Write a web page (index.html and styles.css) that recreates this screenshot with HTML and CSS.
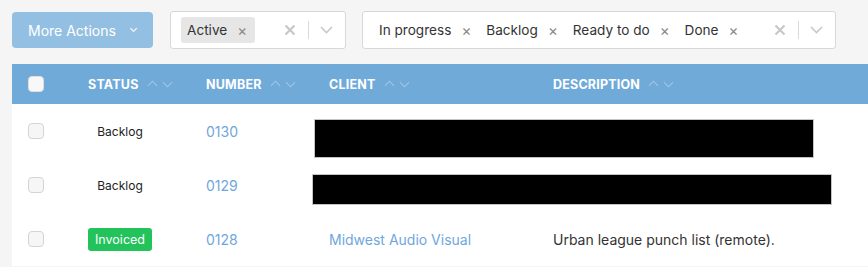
FILE: index.html
```html
<!DOCTYPE html>
<html>
  <head>
    <title>Projects</title>
    <link rel="stylesheet" href="styles.css">
  </head>
  <body>
    <div class="toolbar">
      <button class="more-btn">More Actions <span class="caret">&#8964;</span></button>

      <div class="select select-small">
        <div class="chips">
          <span class="chip chip-grey">Active <span class="chip-x">&times;</span></span>
        </div>
        <div class="select-tools">
          <svg class="clear-ico" width="12" height="12" viewBox="0 0 12 12"><path d="M1.5 1.5 L10.5 10.5 M10.5 1.5 L1.5 10.5" stroke="#c8c8c8" stroke-width="2.2"/></svg>
          <span class="sep"></span>
          <svg class="drop-ico" width="13" height="8" viewBox="0 0 13 8"><path d="M1 1 L6.5 6.5 L12 1" fill="none" stroke="#c8c8c8" stroke-width="1.6"/></svg>
        </div>
      </div>

      <div class="select select-big">
        <div class="chips">
          <span class="chip">In progress <span class="chip-x">&times;</span></span>
          <span class="chip">Backlog <span class="chip-x">&times;</span></span>
          <span class="chip">Ready to do <span class="chip-x">&times;</span></span>
          <span class="chip">Done <span class="chip-x">&times;</span></span>
        </div>
        <div class="select-tools">
          <svg class="clear-ico" width="12" height="12" viewBox="0 0 12 12"><path d="M1.5 1.5 L10.5 10.5 M10.5 1.5 L1.5 10.5" stroke="#c8c8c8" stroke-width="2.2"/></svg>
          <span class="sep"></span>
          <svg class="drop-ico" width="13" height="8" viewBox="0 0 13 8"><path d="M1 1 L6.5 6.5 L12 1" fill="none" stroke="#c8c8c8" stroke-width="1.6"/></svg>
        </div>
      </div>
    </div>

    <div class="table">
      <div class="row head">
        <div class="cell"><span class="check check-head"></span></div>
        <div class="cell">STATUS <span class="sort"><i class="up"></i><i class="down"></i></span></div>
        <div class="cell">NUMBER <span class="sort"><i class="up"></i><i class="down"></i></span></div>
        <div class="cell">CLIENT <span class="sort"><i class="up"></i><i class="down"></i></span></div>
        <div class="cell">DESCRIPTION <span class="sort"><i class="up"></i><i class="down"></i></span></div>
      </div>

      <div class="row">
        <div class="cell"><span class="check"></span></div>
        <div class="cell"><span class="status">Backlog</span></div>
        <div class="cell"><a class="num">0130</a></div>
        <div class="cell"></div>
        <div class="cell"></div>
        <span class="redact redact-1"></span>
      </div>

      <div class="row">
        <div class="cell"><span class="check"></span></div>
        <div class="cell"><span class="status">Backlog</span></div>
        <div class="cell"><a class="num">0129</a></div>
        <div class="cell"></div>
        <div class="cell"></div>
        <span class="redact redact-2"></span>
      </div>

      <div class="row">
        <div class="cell"><span class="check"></span></div>
        <div class="cell"><span class="status status-invoiced">Invoiced</span></div>
        <div class="cell"><a class="num">0128</a></div>
        <div class="cell"><a class="client">Midwest Audio Visual</a></div>
        <div class="cell desc">Urban league punch list (remote).</div>
      </div>
    </div>
  </body>
</html>
```

FILE: styles.css
```css
body {
  margin: 0;
  background: #f5f5f5;
  font-family: Inter, "Noto Sans", sans-serif;
  font-size: 14px;
  color: #333;
}

/* top filter bar */
.toolbar {
  display: flex;
  align-items: center;
  padding: 11px 12px 0 12px;
  height: 38px;
}
.more-btn {
  width: 141px;
  height: 36px;
  background: #93c0e2;
  border: none;
  border-radius: 4px;
  color: #fff;
  font-family: inherit;
  font-size: 14px;
  padding: 0 0 0 16px;
  text-align: left;
  margin-right: 17px;
}
.more-btn .caret {
  display: inline-block;
  margin-left: 9px;
  font-size: 12px;
  position: relative;
  top: -4px;
}

.select {
  display: flex;
  align-items: center;
  height: 36px;
  background: #fff;
  border: 1px solid #d6d8de;
  border-radius: 3px;
  padding-left: 10px;
  box-sizing: content-box;
}
.select-small {
  width: 164px;
  margin-right: 16px;
}
.select-big {
  width: 462px;
}
.chips {
  display: flex;
  align-items: center;
  flex-grow: 1;
  font-size: 13.6px;
}
.chip {
  display: flex;
  align-items: center;
  height: 26px;
  padding: 0 7px 0 6px;
  margin-right: 2px;
  border-radius: 3px;
  color: #333;
}
.chip-grey {
  background: #e6e6e6;
  padding-right: 8px;
}
.chip-x {
  color: #888;
  font-size: 15px;
  margin-left: 10px;
}
.select-tools {
  display: flex;
  align-items: center;
  padding-right: 12px;
}
.clear-ico {
  margin-right: 1px;
}
.sep {
  width: 1px;
  height: 18px;
  background: #d9d9d9;
  margin: 0 11px;
}

/* table */
.table {
  margin: 15px 0 0 12px;
  background: #fff;
}
.row {
  position: relative;
  display: grid;
  grid-template-columns: 76px 118px 123px 224px 1fr;
  height: 54px;
  align-items: center;
}
.cell {
  display: flex;
  align-items: center;
}
.cell:first-child {
  padding-left: 16px;
}
.head {
  height: 40px;
  background: #70aad9;
  color: #fff;
  font-size: 12.5px;
  font-weight: 700;
  letter-spacing: 0.2px;
}
.sort {
  display: inline-flex;
  align-items: center;
  margin-left: 10px;
  gap: 8px;
}
.sort i {
  display: block;
  width: 6px;
  height: 6px;
  border-left: 1.3px solid rgba(255, 255, 255, 0.35);
  border-top: 1.3px solid rgba(255, 255, 255, 0.35);
}
.sort .up {
  transform: rotate(45deg);
  margin-top: 3px;
}
.sort .down {
  transform: rotate(225deg);
  margin-top: -3px;
}

.check {
  display: block;
  width: 14px;
  height: 14px;
  border: 1px solid #d4d4d8;
  border-radius: 4px;
  background: #f6f6f7;
}
.check-head {
  background: #f8f8f8;
  border-color: #e0e0e0;
}

.status {
  width: 64px;
  text-align: center;
  font-size: 12px;
  color: #222;
}
.status-invoiced {
  background: #21c35a;
  color: #fff;
  border-radius: 3px;
  line-height: 23px;
  font-size: 12.5px;
}
.num, .client {
  color: #6fa7dc;
}
.desc {
  color: #333;
}

/* redacted client/description blocks */
.redact {
  position: absolute;
  background: #000;
  border: 1px solid #c4c4c4;
}
.redact-1 {
  left: 302px;
  top: 15px;
  width: 498px;
  height: 37px;
}
.redact-2 {
  left: 300px;
  top: 16px;
  width: 518px;
  height: 29px;
}
```
